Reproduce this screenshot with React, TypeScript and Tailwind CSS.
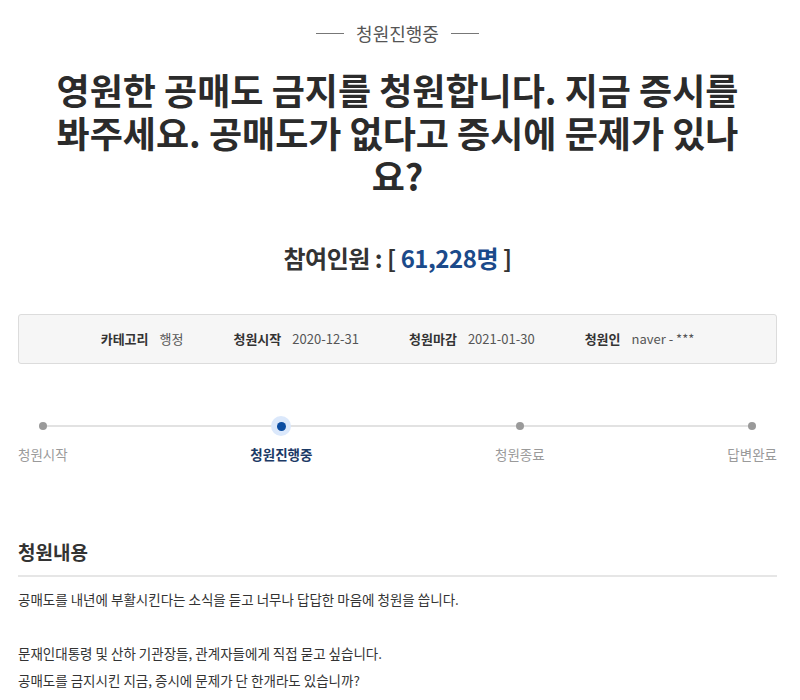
const steps = [
  { label: '청원시작', active: false },
  { label: '청원진행중', active: true },
  { label: '청원종료', active: false },
  { label: '답변완료', active: false },
]

const info = [
  { label: '카테고리', value: '행정' },
  { label: '청원시작', value: '2020-12-31' },
  { label: '청원마감', value: '2021-01-30' },
  { label: '청원인', value: 'naver - ***' },
]

/* ── Timeline ───────────────────────────────────────────────────── */

function Progress() {
  return (
    <div className="relative mt-[52px]">
      <div className="absolute left-[24px] right-[25px] top-[9px] h-[2px] bg-[#e2e2e2]" />
      <div className="relative flex justify-between">
        {steps.map((s) => (
          <div key={s.label} className="flex flex-col items-center">
            <div className="flex h-[20px] w-[20px] items-center justify-center">
              {s.active ? (
                <span className="flex h-[20px] w-[20px] items-center justify-center rounded-full bg-[#dbe8fb]">
                  <span className="h-[9px] w-[9px] rounded-full bg-[#0b4da2]" />
                </span>
              ) : (
                <span className="h-[8px] w-[8px] rounded-full bg-[#9a9a9a]" />
              )}
            </div>
            <span
              className={`mt-[9px] text-[13.5px] leading-[18px] ${
                s.active ? 'font-bold text-[#1c3a66]' : 'text-[#9a9a9a]'
              }`}
            >
              {s.label}
            </span>
          </div>
        ))}
      </div>
    </div>
  )
}

export default function App() {
  return (
    <div
      className="min-h-[700px] w-[800px] bg-white pl-[18px] pr-[23px] pt-[18px] text-[#333]"
      style={{ fontFamily: '"Noto Sans CJK KR", "Noto Sans", sans-serif' }}
    >
      {/* Status tag */}
      <div className="flex items-center justify-center gap-[12px] text-[18px] leading-[30px] text-[#555]">
        <span className="h-px w-[28px] bg-[#777]" />
        <span>청원진행중</span>
        <span className="h-px w-[28px] bg-[#777]" />
      </div>

      {/* Title */}
      <h1 className="mx-auto mt-[20px] w-[696px] text-center text-[36px] font-bold leading-[43px] text-[#2b2b2b]">
        영원한 공매도 금지를 청원합니다. 지금 증시를 봐주세요. 공매도가 없다고 증시에 문제가 있나요?
      </h1>

      {/* Count */}
      <div className="mt-[45px] text-center text-[24px] font-bold leading-[32px] tracking-[-0.02em] text-[#333]">
        참여인원 : [ <span className="text-[#1b4a8a]">61,228명</span> ]
      </div>

      {/* Info box */}
      <div className="mt-[40px] flex h-[50px] items-center justify-center gap-[50px] rounded-[3px] border border-[#dcdcdc] bg-[#f6f6f6] text-[13px]">
        {info.map((i) => (
          <div key={i.label} className="flex items-center gap-[11px]">
            <span className="font-bold text-[#333]">{i.label}</span>
            <span className="text-[#555]">{i.value}</span>
          </div>
        ))}
      </div>

      <Progress />

      {/* Body */}
      <h2 className="mt-[76px] text-[19px] font-bold leading-[26px] text-[#333]">청원내용</h2>
      <div className="mt-[10px] h-[2px] bg-[#e6e6e6]" />
      <div className="mt-[9px] text-[13.5px] leading-[27px] text-[#333]">
        <p>공매도를 내년에 부활시킨다는 소식을 듣고 너무나 답답한 마음에 청원을 씁니다.</p>
        <p>&nbsp;</p>
        <p>문재인대통령 및 산하 기관장들, 관계자들에게 직접 묻고 싶습니다.</p>
        <p>공매도를 금지시킨 지금, 증시에 문제가 단 한개라도 있습니까?</p>
      </div>
    </div>
  )
}
